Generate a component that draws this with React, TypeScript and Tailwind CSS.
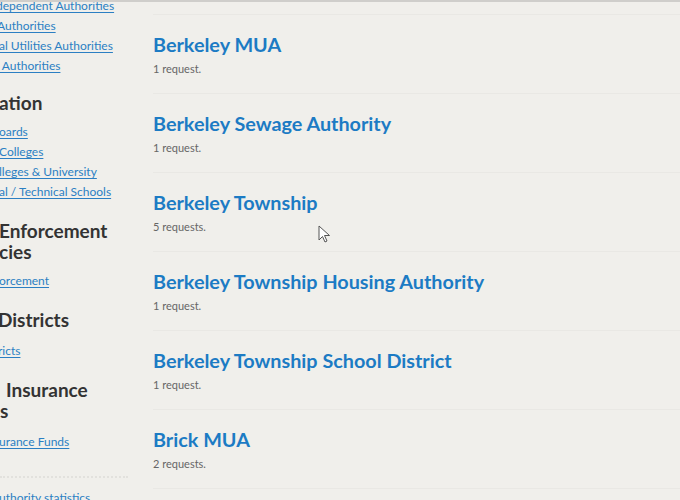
import React from "react";

const items = [
  { name: "Berkeley MUA", count: "1 request." },
  { name: "Berkeley Sewage Authority", count: "1 request." },
  { name: "Berkeley Township", count: "5 requests." },
  { name: "Berkeley Township Housing Authority", count: "1 request." },
  { name: "Berkeley Township School District", count: "1 request." },
  { name: "Brick MUA", count: "2 requests." },
];

function SideLink({ text, shift = "" }: { text: string; shift?: string }) {
  return (
    <a
      href="#"
      className={`block whitespace-nowrap text-[12px] leading-[20px] text-[#2b7fc3] underline underline-offset-2 ${shift}`}
    >
      {text}
    </a>
  );
}

function Heading({ lines, className = "", firstShift = "" }: { lines: string[]; className?: string; firstShift?: string }) {
  return (
    <h3 className={`text-[19px] leading-[21px] font-bold text-[#333] whitespace-nowrap ${className}`}>
      {lines.map((l, i) => (
        <div key={l} className={i === 0 ? firstShift : ""}>
          {l}
        </div>
      ))}
    </h3>
  );
}

function Sidebar() {
  return (
    <div className="w-[130px] shrink-0 overflow-hidden">
      <div className="-mt-[6px]">
        <SideLink text="dependent Authorities" shift="-ml-[4px]" />
        <SideLink text="Authorities" shift="-ml-[3px]" />
        <SideLink text="al Utilities Authorities" shift="-ml-[1px]" />
        <SideLink text="r Authorities" shift="-ml-[5px]" />

        <Heading lines={["ation"]} className="mt-[16px] -ml-[1px]" />
        <div className="mt-[9px]">
          <SideLink text="oards" shift="-ml-[1px]" />
          <SideLink text="Colleges" shift="-ml-[1px]" />
          <SideLink text="lleges & University" shift="-ml-[1px]" />
          <SideLink text="al / Technical Schools" shift="-ml-[1px]" />
        </div>

        <Heading lines={["Enforcement", "cies"]} className="mt-[18px] -ml-[1px]" />
        <div className="mt-[9px]">
          <SideLink text="orcement" shift="-ml-[1px]" />
        </div>

        <Heading lines={["Districts"]} className="mt-[18px] -ml-[2px]" />
        <div className="mt-[11px]">
          <SideLink text="ricts" shift="-ml-[2px]" />
        </div>

        <Heading lines={["Insurance", "s"]} className="mt-[18px]" firstShift="ml-[6px]" />
        <div className="mt-[11px]">
          <SideLink text="urance Funds" shift="-ml-[1px]" />
        </div>

        <div className="mt-[24px] w-[128px] border-t-2 border-dotted border-[#e2e1dd]" />
        <div className="mt-[10px]">
          <SideLink text="uthority statistics" shift="-ml-[1px]" />
        </div>
      </div>
    </div>
  );
}

function Cursor() {
  return (
    <svg
      className="absolute left-[318px] top-[223px]"
      width="13"
      height="19"
      viewBox="0 0 13 19"
    >
      <path
        d="M1 1 L1 15 L4.5 11.5 L7 17 L9 16 L6.5 10.5 L11.5 10.5 Z"
        fill="#ffffff"
        stroke="#555"
        strokeWidth="1"
        strokeLinejoin="round"
      />
    </svg>
  );
}

export default function App() {
  return (
    <div
      className="relative w-[680px] h-[500px] overflow-hidden bg-[#f0efeb] border-t-2 border-[#cfcecb]"
      style={{ fontFamily: "Lato, 'Noto Sans', sans-serif" }}
    >
      <div className="flex gap-[23px]">
        <Sidebar />
        <div className="flex-1 pt-[12px]">
          {items.map((it) => (
            <div key={it.name} className="border-t border-[#e9e8e4] pt-[17px] pb-[17px] h-[79px]">
              <a href="#" className="block text-[19.8px] leading-[24px] font-bold text-[#1c7bc4]">
                {it.name}
              </a>
              <p className="mt-[6px] text-[11px] leading-[14px] text-[#666]">{it.count}</p>
            </div>
          ))}
          <div className="border-t border-[#e9e8e4]" />
        </div>
      </div>
      <Cursor />
    </div>
  );
}
